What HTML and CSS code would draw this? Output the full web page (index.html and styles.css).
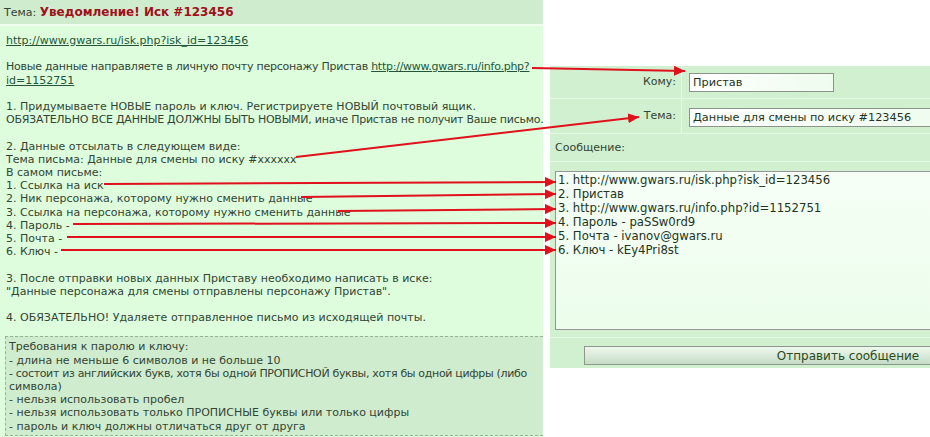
FILE: index.html
```html
<!DOCTYPE html>
<html lang="ru">
<head>
    <meta charset="UTF-8">
    <title>Уведомление! Иск #123456</title>
    <link rel="stylesheet" href="styles.css">
</head>
<body>

    <div class="page">
        <div class="notice">
            <div class="notice-head">Тема: <b>Уведомление! Иск #123456</b></div>
            <div class="notice-body">
                <a href="#">http://www.gwars.ru/isk.php?isk_id=123456</a><br><br>
                <span class="tight">Новые данные направляете в личную почту персонажу Пристав <a href="#">http://www.gwars.ru/info.php?</a></span><br>
                <a href="#">id=1152751</a><br><br>
                1. Придумываете НОВЫЕ пароль и ключ. Регистрируете НОВЫЙ почтовый ящик.<br>
                <span class="tight">ОБЯЗАТЕЛЬНО ВСЕ ДАННЫЕ ДОЛЖНЫ БЫТЬ НОВЫМИ, иначе Пристав не получит Ваше письмо.</span><br><br>
                2. Данные отсылать в следующем виде:<br>
                Тема письма: Данные для смены по иску #xxxxxx<br>
                В самом письме:<br>
                1. Ссылка на иск<br>
                2. Ник персонажа, которому нужно сменить данные<br>
                3. Ссылка на персонажа, которому нужно сменить данные<br>
                4. Пароль -<br>
                5. Почта -<br>
                6. Ключ -<br><br>
                3. После отправки новых данных Приставу необходимо написать в иске:<br>
                "Данные персонажа для смены отправлены персонажу Пристав".<br><br>
                4. ОБЯЗАТЕЛЬНО! Удаляете отправленное письмо из исходящей почты.

                <div class="rules">
                    Требования к паролю и ключу:<br>
                    - длина не меньше 6 символов и не больше 10<br>
                    <span class="tighter">- состоит из английских букв, хотя бы одной ПРОПИСНОЙ буквы, хотя бы одной цифры (либо</span><br>
                    символа)<br>
                    - нельзя использовать пробел<br>
                    - нельзя использовать только ПРОПИСНЫЕ буквы или только цифры<br>
                    - пароль и ключ должны отличаться друг от друга
                </div>
            </div>
        </div>

        <form class="mail-form">
            <div class="form-row row-to">
                <div class="form-label">Кому:</div>
                <div class="form-field"><input class="input-to" type="text" value="Пристав"></div>
            </div>
            <div class="form-row row-subject">
                <div class="form-label">Тема:</div>
                <div class="form-field"><input class="input-subject" type="text" value="Данные для смены по иску #123456"></div>
            </div>
            <div class="form-row row-caption">Сообщение:</div>
            <div class="form-row row-message">
                <textarea class="message">1. http://www.gwars.ru/isk.php?isk_id=123456
2. Пристав
3. http://www.gwars.ru/info.php?id=1152751
4. Пароль - paSSw0rd9
5. Почта - ivanov@gwars.ru
6. Ключ - kEy4Pri8st</textarea>
            </div>
            <div class="form-row row-send">
                <button class="send" type="button">Отправить сообщение</button>
            </div>
        </form>
    </div>

    <!-- annotation arrows -->
    <svg class="arrows" width="930" height="437" viewBox="0 0 930 437">
        <defs>
            <marker id="head" markerUnits="userSpaceOnUse" markerWidth="12" markerHeight="10" refX="11" refY="5" orient="auto">
                <path d="M0,0 L11,5 L0,10 Z" fill="#e0101c"/>
            </marker>
        </defs>
        <g stroke="#e0101c" stroke-width="2" fill="none" marker-end="url(#head)">
            <line x1="532" y1="68" x2="685" y2="71"/>
            <line x1="296" y1="157" x2="639" y2="117"/>
            <line x1="104" y1="184" x2="556" y2="182"/>
            <line x1="301" y1="197" x2="556" y2="194"/>
            <line x1="338" y1="211" x2="556" y2="209"/>
            <line x1="73" y1="224" x2="556" y2="223"/>
            <line x1="67" y1="237" x2="556" y2="237"/>
            <line x1="61" y1="250" x2="556" y2="250"/>
        </g>
    </svg>

</body>
</html>
```

FILE: styles.css
```css
body {
    margin: 0;
    padding: 0;
    background-color: #fff;
    font-family: "DejaVu Sans", Verdana, sans-serif;
    font-size: 11px;
    line-height: 13.2px;
    color: #334433;
    overflow: hidden;
    width: 930px;
    height: 437px;
}

.page {
    display: flex;
    align-items: flex-start;
    gap: 7px;
}

a {
    color: #22553a;
}

/* left column: the notice */

.notice {
    width: 543px;
    height: 437px;
    flex-shrink: 0;
    background-color: #ddfddd;
}

.notice-head {
    height: 24px;
    line-height: 24px;
    padding-left: 4px;
    background-color: #cfeccf;
    border-bottom: 2px solid #eefdee;
}

.notice-head b {
    color: #a0101a;
    font-size: 12px;
}

.notice-body {
    padding: 8px 0 0 6px;
    white-space: nowrap;
}

.tight {
    letter-spacing: -0.25px;
}

.tighter {
    letter-spacing: -0.33px;
}

.rules {
    margin: 12px 0 0 -1px;
    padding: 3px 4px 2px 3px;
    background-color: #cfeccf;
    border: 1px dashed #93b593;
    border-right: none;
}

/* right column: the mail form */

.mail-form {
    margin-top: 66px;
    width: 380px;
    flex-shrink: 0;
    overflow: hidden;
    background-color: #d0f0d0;
}

.form-row {
    display: flex;
    border-bottom: 1px solid #e6f9e6;
}

.form-label {
    width: 126px;
    flex-shrink: 0;
    padding-right: 5px;
    display: flex;
    align-items: center;
    justify-content: flex-end;
    border-right: 1px solid #e6f9e6;
}

.form-field {
    padding-left: 7px;
    display: flex;
    align-items: center;
}

.row-to {
    height: 32px;
}

.row-subject {
    height: 34px;
}

.row-caption {
    height: 27px;
    align-items: center;
    padding-left: 5px;
}

.row-message {
    height: 176px;
    padding: 9px 0 0 5px;
    box-sizing: border-box;
}

.row-send {
    height: 30px;
    border-bottom: none;
    padding: 8px 0 0 34px;
    box-sizing: border-box;
}

input {
    font-family: "DejaVu Sans", Verdana, sans-serif;
    font-size: 11.3px;
    color: #223322;
    height: 19px;
    box-sizing: border-box;
    padding: 0 3px;
    border: 1px solid #8a948a;
    background: linear-gradient(to right, #ffffff, #eefcee);
    outline: none;
}

.input-to {
    width: 145px;
}

.input-subject {
    width: 260px;
    flex-shrink: 0;
    margin-top: 2px;
}

.message {
    width: 380px;
    height: 159px;
    flex-shrink: 0;
    box-sizing: border-box;
    margin: 0;
    padding: 1px 2px;
    font-family: "DejaVu Sans", Verdana, sans-serif;
    font-size: 11.7px;
    line-height: 14px;
    color: #223322;
    border: 1px solid #959595;
    background: linear-gradient(to bottom, #f6fff6, #ecfdec);
    resize: none;
    outline: none;
}

.send {
    width: 528px;
    height: 19px;
    flex-shrink: 0;
    padding: 0;
    font-family: "DejaVu Sans", Verdana, sans-serif;
    font-size: 12px;
    color: #2a4a1a;
    border: 1px solid #8c968c;
    background: linear-gradient(to bottom, #eef7ee, #c6dcc6);
    cursor: pointer;
}

/* arrows lie over both columns */

.arrows {
    position: absolute;
    left: 0;
    top: 0;
    pointer-events: none;
}
```
